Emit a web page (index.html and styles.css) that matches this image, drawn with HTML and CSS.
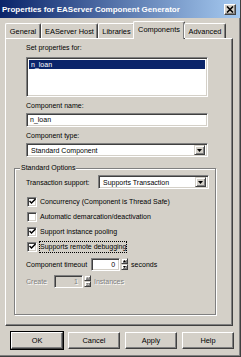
FILE: index.html
```html
<!DOCTYPE html>
<html lang="en">
<head>
    <meta charset="UTF-8">
    <title>Properties for EAServer Component Generator</title>
    <link rel="stylesheet" href="styles.css">
</head>
<body>
    <div class="window">
        <div class="titlebar">
            <span class="title">Properties for EAServer Component Generator</span>
            <span class="close">
                <svg width="8" height="7" viewBox="0 0 8 7"><path d="M1 0.5 L7 6.5 M7 0.5 L1 6.5" stroke="#000" stroke-width="1.6"/></svg>
            </span>
        </div>

        <div class="tabs">
            <div class="tab tab-general">General</div>
            <div class="tab tab-host">EAServer Host</div>
            <div class="tab tab-libs">Libraries</div>
            <div class="tab tab-comp active">Components</div>
            <div class="tab tab-adv">Advanced</div>
        </div>

        <div class="panel">
            <div class="label first">Set properties for:</div>
            <div class="listbox">
                <div class="item selected">n_loan</div>
            </div>

            <div class="label">Component name:</div>
            <div class="field">n_loan</div>

            <div class="label">Component type:</div>
            <div class="combo">
                <span class="combo-text">Standard Component</span>
                <span class="drop"><svg width="5" height="3" viewBox="0 0 5 3"><path d="M0 0 H5 L2.5 3 Z" fill="#000"/></svg></span>
            </div>

            <fieldset class="group">
                <legend>Standard Options</legend>

                <div class="row trans">
                    <span>Transaction support:</span>
                    <div class="combo small">
                        <span class="combo-text">Supports Transaction</span>
                        <span class="drop"><svg width="5" height="3" viewBox="0 0 5 3"><path d="M0 0 H5 L2.5 3 Z" fill="#000"/></svg></span>
                    </div>
                </div>

                <div class="check first-check">
                    <span class="box"><svg width="7" height="7" viewBox="0 0 7 7"><path d="M0.5 3 L2.5 5 L6.5 1" stroke="#000" stroke-width="1.5" fill="none"/></svg></span>
                    <span>Concurrency (Component is Thread Safe)</span>
                </div>
                <div class="check">
                    <span class="box"></span>
                    <span>Automatic demarcation/deactivation</span>
                </div>
                <div class="check">
                    <span class="box"><svg width="7" height="7" viewBox="0 0 7 7"><path d="M0.5 3 L2.5 5 L6.5 1" stroke="#000" stroke-width="1.5" fill="none"/></svg></span>
                    <span>Support instance pooling</span>
                </div>
                <div class="check">
                    <span class="box"><svg width="7" height="7" viewBox="0 0 7 7"><path d="M0.5 3 L2.5 5 L6.5 1" stroke="#000" stroke-width="1.5" fill="none"/></svg></span>
                    <span class="focus">Supports remote debugging</span>
                </div>

                <div class="row timeout">
                    <span>Component timeout</span>
                    <div class="num">0</div>
                    <div class="spin">
                        <span class="spin-btn"><svg width="3" height="2" viewBox="0 0 3 2"><path d="M0 2 H3 L1.5 0 Z" fill="#000"/></svg></span>
                        <span class="spin-btn"><svg width="3" height="2" viewBox="0 0 3 2"><path d="M0 0 H3 L1.5 2 Z" fill="#000"/></svg></span>
                    </div>
                    <span>seconds</span>
                </div>

                <div class="row create disabled">
                    <span>Create</span>
                    <div class="num">1</div>
                    <div class="spin">
                        <span class="spin-btn"><svg width="3" height="2" viewBox="0 0 3 2"><path d="M0 2 H3 L1.5 0 Z" fill="#808080"/></svg></span>
                        <span class="spin-btn"><svg width="3" height="2" viewBox="0 0 3 2"><path d="M0 0 H3 L1.5 2 Z" fill="#808080"/></svg></span>
                    </div>
                    <span>Instances</span>
                </div>
            </fieldset>
        </div>

        <div class="buttons">
            <button class="btn default">OK</button>
            <button class="btn">Cancel</button>
            <button class="btn">Apply</button>
            <button class="btn">Help</button>
        </div>
    </div>
</body>
</html>
```

FILE: styles.css
```css
body {
    margin: 0;
    font-family: 'Liberation Sans', Arial, sans-serif;
    font-size: 7px;
    color: #000;
    background-color: #d4d0c8;
}

.window {
    width: 241px;
    height: 357px;
    box-sizing: border-box;
    background-color: #d4d0c8;
    border-right: 1px solid #404040;
    border-bottom: 1px solid #404040;
    box-shadow: inset -1px -1px 0 #808080;
}

/* title bar */
.titlebar {
    height: 18px;
    display: flex;
    align-items: center;
    justify-content: space-between;
    padding: 0 4px 0 2px;
    background: linear-gradient(to right, #0a246a, #a6caf0);
}

.title {
    color: white;
    font-weight: bold;
    font-size: 8px;
    white-space: nowrap;
}

.close {
    width: 10px;
    height: 9px;
    display: flex;
    align-items: center;
    justify-content: center;
    background-color: #d4d0c8;
    border: 1px solid;
    border-color: #fff #404040 #404040 #fff;
    box-shadow: inset -1px -1px 0 #808080;
}

/* tabs */
.tabs {
    display: flex;
    align-items: flex-end;
    margin-top: 3px;
    padding-left: 5px;
    height: 17px;
    position: relative;
    z-index: 1;
}

.tab {
    height: 15px;
    box-sizing: border-box;
    padding-top: 3px;
    text-align: center;
    font-size: 7.4px;
    border: 1px solid;
    border-bottom: none;
    border-color: #fff #404040 #fff #fff;
    box-shadow: inset -1px 0 0 #808080;
    border-radius: 2px 2px 0 0;
    white-space: nowrap;
}

.tab-general { width: 36px; }
.tab-host { width: 57px; }
.tab-libs { width: 37px; }
.tab-adv { width: 42px; }

.tab.active {
    width: 52px;
    height: 18px;
    margin: 0 -1px -1px -2px;
    background-color: #d4d0c8;
}

/* tab panel */
.panel {
    margin-left: 5px;
    width: 228px;
    height: 288px;
    box-sizing: border-box;
    border: 1px solid;
    border-color: #fff #404040 #404040 #fff;
    box-shadow: inset -1px -1px 0 #808080;
    padding: 4px 24px 0 20px;
}

.label {
    height: 10px;
    line-height: 10px;
    margin-top: 4px;
    margin-bottom: 2px;
}

.label.first {
    margin-top: 0;
    margin-bottom: 4px;
}

.listbox, .field, .combo, .num {
    box-sizing: border-box;
    background-color: white;
    border: 1px solid;
    border-color: #808080 #fff #fff #808080;
    box-shadow: inset 1px 1px 0 #404040, inset -1px -1px 0 #d4d0c8;
}

.listbox {
    height: 40px;
    padding: 2px;
}

.item {
    height: 9px;
    line-height: 9px;
    padding-left: 2px;
}

.item.selected {
    background-color: #0a246a;
    color: white;
}

.field {
    height: 14px;
    line-height: 12px;
    padding-left: 3px;
}

.combo {
    height: 14px;
    display: flex;
    align-items: center;
    padding: 2px;
}

.combo-text {
    flex: 1;
    padding-left: 2px;
    white-space: nowrap;
}

.drop, .spin-btn {
    display: flex;
    align-items: center;
    justify-content: center;
    box-sizing: border-box;
    background-color: #d4d0c8;
    border: 1px solid;
    border-color: #d4d0c8 #404040 #404040 #d4d0c8;
    box-shadow: inset 1px 1px 0 #fff, inset -1px -1px 0 #808080;
}

.drop {
    width: 11px;
    height: 10px;
}

/* group box */
.group {
    margin: 6px -8px 0 -12px;
    padding: 2px 6px 0 11px;
    height: 152px;
    box-sizing: border-box;
    border: 1px solid #808080;
    box-shadow: 1px 1px 0 #fff, inset 1px 1px 0 #fff;
}

.group legend {
    padding: 0 1px;
    margin-left: -6px;
    height: 10px;
    line-height: 10px;
    background-color: #d4d0c8;
}

.row {
    display: flex;
    align-items: center;
    height: 14px;
    white-space: nowrap;
}

.trans {
    justify-content: space-between;
}

.combo.small {
    width: 111px;
}

.check {
    display: flex;
    align-items: center;
    height: 15px;
    white-space: nowrap;
}

.first-check {
    margin-top: 5px;
}

.box {
    width: 10px;
    height: 10px;
    margin: 0 3px 0 1px;
    box-sizing: border-box;
    display: flex;
    align-items: center;
    justify-content: center;
    background-color: white;
    border: 1px solid;
    border-color: #808080 #fff #fff #808080;
    box-shadow: inset 1px 1px 0 #404040, inset -1px -1px 0 #d4d0c8;
}

.focus {
    outline: 1px dotted #000;
    outline-offset: 0;
    line-height: 10px;
}

.timeout {
    margin-top: 3px;
}

.create {
    margin-top: 3px;
}

.num {
    width: 29px;
    height: 13px;
    text-align: right;
    padding-right: 4px;
    line-height: 11px;
}

.timeout .num {
    margin-left: 4px;
}

.create .num {
    margin-left: 7px;
}

.spin {
    display: flex;
    flex-direction: column;
    margin: 0 3px 0 1px;
}

.spin-btn {
    width: 7px;
    height: 6px;
}

.disabled {
    color: #808080;
    text-shadow: 1px 1px 0 #fff;
}

.disabled .num {
    background-color: #d4d0c8;
}

/* dialog buttons */
.buttons {
    display: flex;
    gap: 5px;
    margin: 6px 0 0 11px;
}

.btn {
    width: 52px;
    height: 17px;
    padding: 0;
    font-family: inherit;
    font-size: 7.4px;
    color: #000;
    background-color: #d4d0c8;
    border: 1px solid;
    border-color: #fff #404040 #404040 #fff;
    box-shadow: inset -1px -1px 0 #808080;
}

.btn.default {
    outline: 1px solid #000;
}
```
